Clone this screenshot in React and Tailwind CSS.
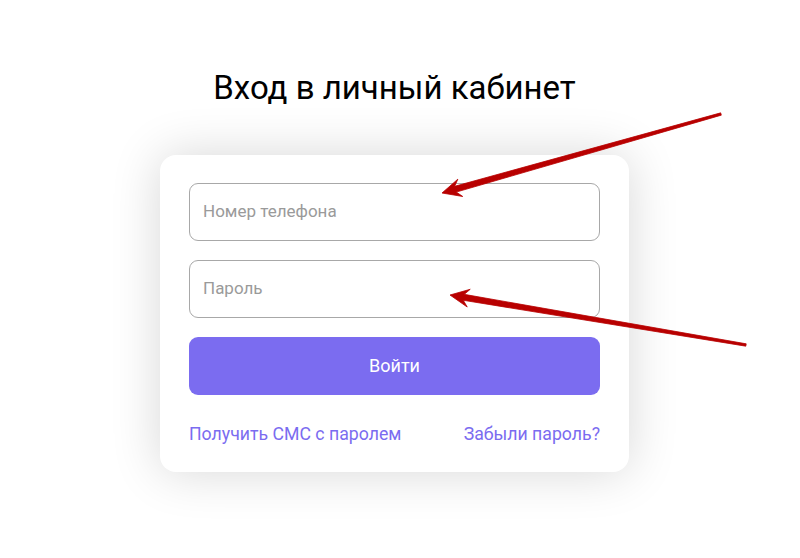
import React from "react";

function Arrow({ tail, tip }) {
  const [tx, ty] = tail;
  const [px, py] = tip;
  const L = Math.hypot(px - tx, py - ty);
  const dx = (px - tx) / L;
  const dy = (py - ty) / L;
  const nx = -dy;
  const ny = dx;
  const hl = 19;
  const bx = px - dx * hl;
  const by = py - dy * hl;
  const nb = px - dx * (hl - 5);
  const nby = py - dy * (hl - 5);
  const pts = [
    [tx + nx * 1.2, ty + ny * 1.2],
    [nb + nx * 3, nby + ny * 3],
    [bx + nx * 9, by + ny * 9],
    [px, py],
    [bx - nx * 9, by - ny * 9],
    [nb - nx * 3, nby - ny * 3],
    [tx - nx * 1.2, ty - ny * 1.2],
  ];
  return (
    <polygon
      points={pts.map((p) => p.join(",")).join(" ")}
      fill="#b80000"
      stroke="#b80000"
      strokeWidth="0.8"
      strokeLinejoin="round"
    />
  );
}

export default function App() {
  return (
    <div
      className="relative w-[800px] h-[558px] bg-white overflow-hidden"
      style={{ fontFamily: "Roboto, 'Noto Sans', sans-serif" }}
    >
      <div className="w-[789px] flex flex-col items-center pt-[64px]">
        <h1 className="text-[33px] leading-[48px] font-normal text-black">
          Вход в личный кабинет
        </h1>
        <div className="mt-[43px] w-[469px] bg-white rounded-[16px] shadow-[0_0_50px_rgba(0,0,0,0.16)] px-[29px] pt-[28px] pb-[26px] flex flex-col">
          <div className="h-[58px] rounded-[9px] border border-[#a8a8a8] flex items-center px-[13px] text-[17px] text-[#9a9a9a]">
            Номер телефона
          </div>
          <div className="mt-[19px] h-[58px] rounded-[9px] border border-[#a8a8a8] flex items-center px-[13px] text-[17px] text-[#9a9a9a]">
            Пароль
          </div>
          <button className="mt-[19px] h-[58px] rounded-[9px] bg-[#7b6cf0] text-white text-[18px] font-normal flex items-center justify-center pb-[2px]">
            Войти
          </button>
          <div className="mt-[27px] flex justify-between text-[17.7px] leading-[24px] text-[#7b6cf0]">
            <span>Получить СМС с паролем</span>
            <span>Забыли пароль?</span>
          </div>
        </div>
      </div>
      <svg
        className="absolute inset-0 pointer-events-none"
        width="800"
        height="558"
        viewBox="0 0 800 558"
      >
        <Arrow tail={[721, 114]} tip={[442, 193]} />
        <Arrow tail={[746, 345]} tip={[450, 295]} />
      </svg>
    </div>
  );
}
